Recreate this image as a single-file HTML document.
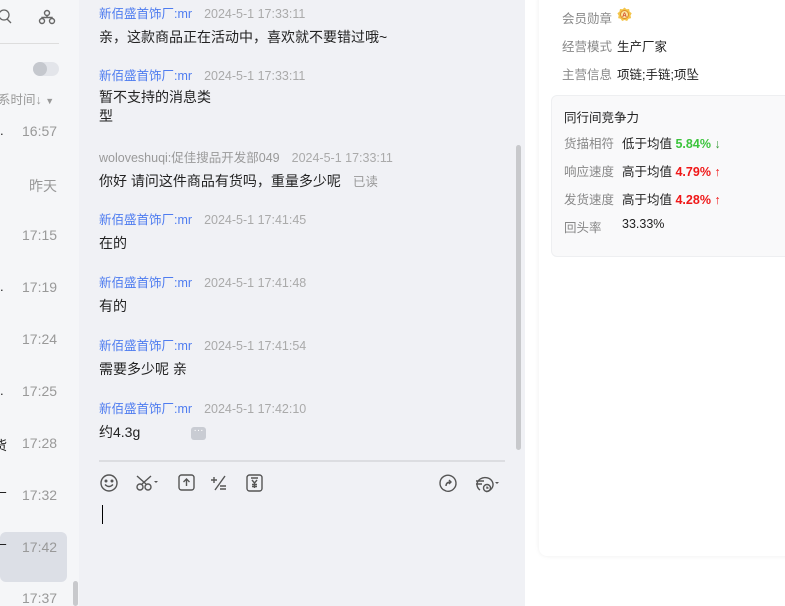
<!DOCTYPE html>
<html><head><meta charset="utf-8"><style>
*{margin:0;padding:0;box-sizing:border-box}
body{width:785px;height:606px;overflow:hidden;position:relative;font-family:"Liberation Sans","Noto Sans CJK SC",sans-serif;font-size:13px;color:#222;background:#fff}
.a{position:absolute;white-space:nowrap}
#left{position:absolute;left:0;top:0;width:79px;height:606px;background:#f5f6f8}
#chat{position:absolute;left:79px;top:0;width:446px;height:606px;background:#f0f1f5}
.t{color:#999;font-size:14px}
.n{font-size:12.5px;color:#4e7cf0}
.n span{color:#aaa;margin-left:12px}
.n.g{color:#999}
.m{font-size:14px;color:#222}
.lab{color:#888;font-size:12.5px}
.val{color:#222;font-size:12.5px}
</style></head><body>
<div id="left">
 <svg class="a" style="left:0;top:9px" width="14" height="16" viewBox="0 0 14 16"><circle cx="4" cy="6" r="5" fill="none" stroke="#666" stroke-width="1.3"/><path d="M7 10 L11 14" stroke="#666" stroke-width="1.3"/></svg>
 <svg class="a" style="left:38px;top:9px" width="18" height="16" viewBox="0 0 18 16"><circle cx="9" cy="4" r="2.5" fill="none" stroke="#666" stroke-width="1.4"/><circle cx="4" cy="12" r="2.5" fill="none" stroke="#666" stroke-width="1.4"/><circle cx="14" cy="12" r="2.5" fill="none" stroke="#666" stroke-width="1.4"/><path d="M9 6.5V9M4 9.5V8.5H14V9.5" fill="none" stroke="#666" stroke-width="1.4"/></svg>
 <div class="a" style="left:0;top:43px;width:59px;height:1px;background:#ddd"></div>
 <div class="a" style="left:33px;top:62px;width:26px;height:14px;border-radius:7px;background:#e3e5ea"></div>
 <div class="a" style="left:33px;top:62px;width:14px;height:14px;border-radius:7px;background:#c5c8ce"></div>
 <div class="a" style="left:-2px;top:89px;font-size:12.5px;color:#999">系时间↓ <span style="font-size:9px">▼</span></div>
 <div class="a" style="left:0;top:532px;width:67px;height:50px;border-radius:6px;background:#dcdfe6"></div>
 <div class="a t" style="left:22px;top:123px">16:57</div>
 <div class="a t" style="left:29px;top:176px">昨天</div>
 <div class="a t" style="left:22px;top:227px">17:15</div>
 <div class="a t" style="left:22px;top:279px">17:19</div>
 <div class="a t" style="left:22px;top:331px">17:24</div>
 <div class="a t" style="left:22px;top:383px">17:25</div>
 <div class="a t" style="left:22px;top:435px">17:28</div>
 <div class="a t" style="left:22px;top:487px">17:32</div>
 <div class="a t" style="left:22px;top:539px">17:42</div>
 <div class="a t" style="left:22px;top:590px">17:37</div>
 <div class="a" style="left:0;top:123px;font-size:13px">.</div>
 <div class="a" style="left:0;top:279px;font-size:13px">.</div>
 <div class="a" style="left:0;top:383px;font-size:13px">.</div>
 <div class="a" style="left:-6px;top:435px;font-size:13px">货</div>
 <div class="a" style="left:-6px;top:487px;font-size:13px">厂</div>
 <div class="a" style="left:-6px;top:539px;font-size:13px">厂</div>
 <div class="a" style="left:73px;top:581px;width:5px;height:25px;border-radius:3px;background:#c8c9cc"></div>
</div>
<div id="chat">
 <div class="a n" style="left:20px;top:3px">新佰盛首饰厂:mr<span>2024-5-1 17:33:11</span></div>
 <div class="a m" style="left:20px;top:27px">亲，这款商品正在活动中，喜欢就不要错过哦~</div>
 <div class="a n" style="left:20px;top:65px">新佰盛首饰厂:mr<span>2024-5-1 17:33:11</span></div>
 <div class="a m" style="left:20px;top:88px;line-height:19px;white-space:normal">暂不支持的消息类<br>型</div>
 <div class="a n g" style="left:20px;top:147px">woloveshuqi:促佳搜品开发部049<span>2024-5-1 17:33:11</span></div>
 <div class="a m" style="left:20px;top:171px">你好 请问这件商品有货吗，重量多少呢<span style="color:#999;font-size:12.5px;margin-left:12px">已读</span></div>
 <div class="a n" style="left:20px;top:209px">新佰盛首饰厂:mr<span>2024-5-1 17:41:45</span></div>
 <div class="a m" style="left:20px;top:233px">在的</div>
 <div class="a n" style="left:20px;top:272px">新佰盛首饰厂:mr<span>2024-5-1 17:41:48</span></div>
 <div class="a m" style="left:20px;top:296px">有的</div>
 <div class="a n" style="left:20px;top:335px">新佰盛首饰厂:mr<span>2024-5-1 17:41:54</span></div>
 <div class="a m" style="left:20px;top:359px">需要多少呢 亲</div>
 <div class="a n" style="left:20px;top:398px">新佰盛首饰厂:mr<span>2024-5-1 17:42:10</span></div>
 <div class="a m" style="left:20px;top:422px">约4.3g</div>
 <div class="a" style="left:112px;top:427px;width:15px;height:13px;border-radius:3px;background:#c9ccd3;color:#fff;font-size:10px;line-height:8px;text-align:center">···</div>
 <div class="a" style="left:437px;top:145px;width:5px;height:305px;border-radius:3px;background:#c8c9cc"></div>
 <div class="a" style="left:20px;top:460px;width:406px;height:2px;background:#dcdde1"></div>
 <svg class="a" style="left:20px;top:472px" width="420" height="22" viewBox="0 0 420 22" fill="none" stroke="#555" stroke-width="1.4">
  <circle cx="10" cy="11" r="8"/><circle cx="7" cy="9" r="0.8" fill="#555"/><circle cx="13" cy="9" r="0.8" fill="#555"/><path d="M6 12.5q4 4 8 0"/>
  <circle cx="41" cy="15" r="3"/><circle cx="49" cy="15" r="3"/><path d="M43 12L52 4M47 12L38 4"/><path d="M55 9l2 2l2-2z" fill="#555" stroke="none"/>
  <rect x="80" y="3" width="15" height="15" rx="2.5"/><path d="M87.5 14V7M84.5 10l3-3l3 3"/>
  <path d="M112 8h6M115 5v6M126 4l-10 14M121 14h6M121 17h6"/>
  <rect x="148" y="3" width="15" height="16" rx="2.5"/><path d="M152 6h7M153 8l2.5 3l2.5-3M155.5 11v5M153 12.5h5M153 14.5h5"/>
  <path d="M347 19l-3-1.5a8 8 0 1 1 3 1.5z"/><path d="M347 14q0-4 5-4M350 8l2 2l-2 2"/>
  <path d="M381 18a8 7 0 1 1 6 1.5M377 9h8M377 12h6"/><circle cx="388" cy="16" r="3.5"/><path d="M388 14.5v1.5h1.5"/><path d="M396 10l2 2l2-2z" fill="#555" stroke="none"/>
 </svg>
 <div class="a" style="left:23px;top:505px;width:1px;height:19px;background:#000"></div>
</div>
<div class="a" style="left:539px;top:-10px;width:260px;height:566px;background:#fff;border-radius:8px;box-shadow:0 0 5px rgba(0,0,0,0.07)"></div>
<div class="a lab" style="left:562px;top:8px">会员勋章</div>
<svg class="a" style="left:617px;top:7px" width="15" height="15" viewBox="0 0 15 15"><path d="M7.5 0.5l2 1.8 2.6-.3.5 2.6 2.1 1.6-1.2 2.3.6 2.6-2.6.7-1.4 2.2-2.6-1-2.4 1-1.4-2.2-2.6-.7.6-2.6L.4 6.2l2.1-1.6.5-2.6 2.6.3z" fill="#f3c44a"/><circle cx="7.5" cy="7.5" r="4" fill="#fbe6a0" stroke="#e08a2a" stroke-width="1"/><text x="7.5" y="10" font-size="6.5" text-anchor="middle" fill="#d2462a" font-family="Liberation Sans" font-weight="bold">A</text></svg>
<div class="a lab" style="left:562px;top:36px">经营模式</div><div class="a val" style="left:617px;top:36px">生产厂家</div>
<div class="a lab" style="left:562px;top:64px">主营信息</div><div class="a val" style="left:617px;top:64px">项链;手链;项坠</div>
<div class="a" style="left:551px;top:95px;width:250px;height:162px;background:#f9f9fa;border:1px solid #eeeff1;border-radius:6px"></div>
<div class="a val" style="left:564px;top:107px">同行间竞争力</div>
<div class="a lab" style="left:564px;top:133px">货描相符</div><div class="a val" style="left:622px;top:133px">低于均值 <b style="color:#3cc43c">5.84%</b> <span style="color:#3c9c3c">↓</span></div>
<div class="a lab" style="left:564px;top:161px">响应速度</div><div class="a val" style="left:622px;top:161px">高于均值 <b style="color:#f01818">4.79%</b> <span style="color:#f01818">↑</span></div>
<div class="a lab" style="left:564px;top:189px">发货速度</div><div class="a val" style="left:622px;top:189px">高于均值 <b style="color:#f01818">4.28%</b> <span style="color:#f01818">↑</span></div>
<div class="a lab" style="left:564px;top:217px">回头率</div><div class="a val" style="left:622px;top:217px">33.33%</div>
</body></html>
